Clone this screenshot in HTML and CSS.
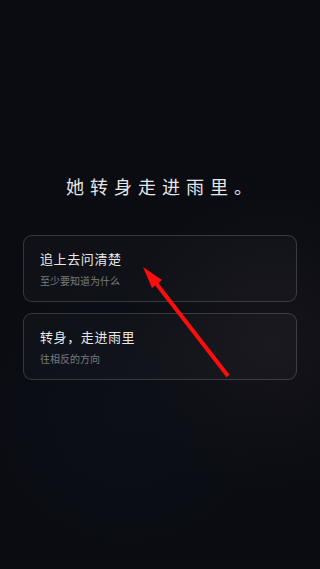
FILE: index.html
```html
<!DOCTYPE html>
<html lang="zh-CN">
  <head>
    <meta charset="UTF-8" />
    <meta name="viewport" content="width=device-width, initial-scale=1.0" />
    <title>雨</title>
    <link rel="stylesheet" href="styles.css">
  </head>

  <body>
    <div class="scene">
      <h1 class="scene-line">她转身走进雨里。</h1>
      <div class="choices">
        <button class="choice">
          <span class="choice-title">追上去问清楚</span>
          <span class="choice-sub">至少要知道为什么</span>
        </button>
        <button class="choice">
          <span class="choice-title">转身，走进雨里</span>
          <span class="choice-sub">往相反的方向</span>
        </button>
      </div>
    </div>

    <!-- pointer drawn over the first choice -->
    <svg class="pointer" viewBox="0 0 320 569" width="320" height="569">
      <line x1="228" y1="376" x2="152" y2="278" stroke="#ff0d0d" stroke-width="4" />
      <polygon points="143,267 162,280 152,288" fill="#ff0d0d" />
    </svg>
  </body>
</html>
```

FILE: styles.css
```css
html,
body {
  margin: 0;
  padding: 0;
}

body {
  font-family: "Noto Sans CJK SC", "Noto Sans", sans-serif;
  background: radial-gradient(circle at 85% 60%, #15141a 0%, rgba(10, 12, 18, 0) 35%),
    radial-gradient(circle at 40% 72%, #0c0f17 0%, rgba(10, 12, 18, 0) 35%),
    #0a0c12;
  height: 569px;
  overflow: hidden;
  position: relative;
}

.scene {
  display: flex;
  flex-direction: column;
  padding: 173px 23px 0;
}

.scene-line {
  margin: 0;
  text-align: center;
  font-size: 18px;
  line-height: 26px;
  font-weight: 400;
  letter-spacing: 6px;
  padding-left: 4px;
  color: #e6e6e6;
}

.choices {
  display: flex;
  flex-direction: column;
  gap: 11px;
  margin-top: 36px;
}

.choice {
  display: flex;
  flex-direction: column;
  align-items: flex-start;
  gap: 5px;
  padding: 13px 16px;
  background: rgba(255, 255, 255, 0.025);
  border: 1px solid rgba(255, 255, 255, 0.16);
  border-radius: 9px;
  font-family: inherit;
  text-align: left;
  cursor: pointer;
}

.choice-title {
  font-size: 13px;
  line-height: 20px;
  letter-spacing: 0.6px;
  color: #e8e8e8;
}

.choice-sub {
  font-size: 10px;
  line-height: 14px;
  color: #7a7a7e;
}

.pointer {
  position: absolute;
  left: 0;
  top: 0;
  pointer-events: none;
}
```
